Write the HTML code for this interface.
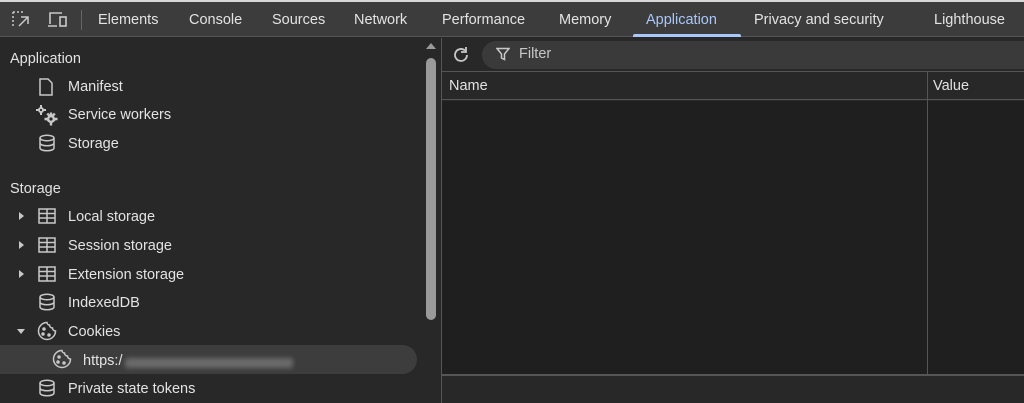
<!DOCTYPE html>
<html><head><style>
*{margin:0;padding:0;box-sizing:border-box}
body{width:1024px;height:403px;overflow:hidden;background:#282828;font-family:"Segoe UI","Liberation Sans",sans-serif;font-size:14.5px;color:#e3e3e3;position:relative}
.top{position:absolute;left:0;top:0;width:1024px;height:2px;background:#d8d8d8}
.tb{position:absolute;left:0;top:2px;width:1024px;height:35px;background:#3c3c3c;border-bottom:1px solid #555}
.tab{position:absolute;top:10px;color:#e3e3e3;font-size:14.5px}
.act{color:#a8c7fa}
.ul{position:absolute;left:633px;top:32px;width:108px;height:3px;background:#a8c7fa;border-radius:2px 2px 0 0}
.sb{position:absolute;left:0;top:38px;width:441px;height:365px;background:#282828}
.row{position:absolute;left:68px;font-size:14.5px;color:#e3e3e3;margin-top:2px}
.hd{position:absolute;left:10px;font-size:14.5px;color:#e3e3e3;margin-top:2px}
.ic{position:absolute}
.arr{position:absolute;left:19px;width:0;height:0;border-top:4px solid transparent;border-bottom:4px solid transparent;border-left:5px solid #c8c8c8}
.sel{position:absolute;left:0;top:307px;width:417px;height:29px;background:#3d3d3d;border-radius:0 15px 15px 0}
.scr{position:absolute;left:426px;width:10px;height:262px;background:#9a9a9a;border-radius:5px}
.rp{position:absolute;left:441px;top:38px;width:583px;height:365px;border-left:1px solid #555}
</style></head><body>
<div class="top"></div>
<div class="tb">
<svg class="ic" style="left:12px;top:9px" width="20" height="18" viewBox="0 0 20 18" fill="none" stroke="#c8c8c8" stroke-width="1.5"><path d="M1 1h12M1 1v14" stroke-dasharray="2 2"/><path d="M7 15L16 6M9 6h7v7"/></svg>
<svg class="ic" style="left:47px;top:9px" width="22" height="18" viewBox="0 0 22 18" fill="none" stroke="#c8c8c8" stroke-width="1.6"><path d="M3 13V2h12M1 15h9"/><rect x="13" y="6" width="6" height="9"/></svg>
<div style="position:absolute;left:81px;top:8px;width:1px;height:20px;background:#666"></div>
<span class="tab" style="left:98px">Elements</span>
<span class="tab" style="left:189px">Console</span>
<span class="tab" style="left:272px">Sources</span>
<span class="tab" style="left:354px">Network</span>
<span class="tab" style="left:442px">Performance</span>
<span class="tab" style="left:559px">Memory</span>
<span class="tab act" style="left:646px">Application</span>
<span class="tab" style="left:754px">Privacy and security</span>
<span class="tab" style="left:934px">Lighthouse</span>
<div class="ul"></div>
</div>
<div class="sb">
<div class="hd" style="top:11px">Application</div>
<svg class="ic" style="left:38px;top:40px" width="16" height="18" viewBox="0 0 16 18" fill="none" stroke="#c8c8c8" stroke-width="1.5"><path d="M2 1h8l4 4v12H2z"/></svg>
<div class="row" style="top:39px">Manifest</div>
<svg class="ic" style="left:35px;top:66px" width="24" height="22" viewBox="0 0 24 22" fill="#c8c8c8"><g><circle cx="6" cy="6" r="3"/><path d="M5 1h2v10H5zM1 5h10v2H1z"/></g><circle cx="6" cy="6" r="1.1" fill="#282828"/><g><circle cx="16" cy="15" r="4"/><path d="M14.8 8.5h2.4v13h-2.4zM9.5 13.8h13v2.4h-13z"/><path d="M11.4 10.4l1.7-1.7 7.5 7.5-1.7 1.7zM19 8.7l1.7 1.7-7.5 7.5-1.7-1.7z"/></g><circle cx="16" cy="15" r="1.6" fill="#282828"/></svg>
<div class="row" style="top:67px">Service workers</div>
<svg class="ic" style="left:38px;top:96px" width="18" height="18" viewBox="0 0 18 18" fill="none" stroke="#c8c8c8" stroke-width="1.5"><ellipse cx="9" cy="4" rx="7" ry="2.8"/><path d="M2 4v10c0 1.6 3 2.8 7 2.8s7-1.2 7-2.8V4M2 9c0 1.6 3 2.8 7 2.8s7-1.2 7-2.8"/></svg>
<div class="row" style="top:96px">Storage</div>
<div class="hd" style="top:141px">Storage</div>
<div class="arr" style="top:174px"></div>
<svg class="ic" style="left:38px;top:170px" width="18" height="16" viewBox="0 0 18 16" fill="none" stroke="#c8c8c8" stroke-width="1.5"><rect x="1" y="1" width="16" height="14"/><path d="M1 5.5h16M1 10h16M9 1v14"/></svg>
<div class="row" style="top:169px">Local storage</div>
<div class="arr" style="top:203px"></div>
<svg class="ic" style="left:38px;top:199px" width="18" height="16" viewBox="0 0 18 16" fill="none" stroke="#c8c8c8" stroke-width="1.5"><rect x="1" y="1" width="16" height="14"/><path d="M1 5.5h16M1 10h16M9 1v14"/></svg>
<div class="row" style="top:198px">Session storage</div>
<div class="arr" style="top:232px"></div>
<svg class="ic" style="left:38px;top:228px" width="18" height="16" viewBox="0 0 18 16" fill="none" stroke="#c8c8c8" stroke-width="1.5"><rect x="1" y="1" width="16" height="14"/><path d="M1 5.5h16M1 10h16M9 1v14"/></svg>
<div class="row" style="top:227px">Extension storage</div>
<svg class="ic" style="left:38px;top:255px" width="18" height="18" viewBox="0 0 18 18" fill="none" stroke="#c8c8c8" stroke-width="1.5"><ellipse cx="9" cy="4" rx="7" ry="2.8"/><path d="M2 4v10c0 1.6 3 2.8 7 2.8s7-1.2 7-2.8V4M2 9c0 1.6 3 2.8 7 2.8s7-1.2 7-2.8"/></svg>
<div class="row" style="top:255px">IndexedDB</div>
<div style="position:absolute;left:17px;top:291px;border-left:4px solid transparent;border-right:4px solid transparent;border-top:5px solid #c8c8c8"></div>
<div class="sel"></div>
<svg class="ic" style="left:37px;top:283px" width="20" height="20" viewBox="0 0 20 20" fill="none" stroke="#c8c8c8" stroke-width="1.5"><path d="M10 1.5a8.5 8.5 0 1 0 8.5 8.5 3 3 0 0 1-3-3 3 3 0 0 1-3-3 2.5 2.5 0 0 1-2.5-2.5z"/><circle cx="7" cy="8" r="1" fill="#c8c8c8"/><circle cx="6" cy="13" r="1" fill="#c8c8c8"/><circle cx="12" cy="14" r="1" fill="#c8c8c8"/></svg>
<div class="row" style="top:284px">Cookies</div>
<svg class="ic" style="left:52px;top:311px" width="20" height="20" viewBox="0 0 20 20" fill="none" stroke="#c8c8c8" stroke-width="1.5"><path d="M10 1.5a8.5 8.5 0 1 0 8.5 8.5 3 3 0 0 1-3-3 3 3 0 0 1-3-3 2.5 2.5 0 0 1-2.5-2.5z"/><circle cx="7" cy="8" r="1" fill="#c8c8c8"/><circle cx="6" cy="13" r="1" fill="#c8c8c8"/><circle cx="12" cy="14" r="1" fill="#c8c8c8"/></svg>
<div class="row" style="left:83px;top:313px">https:/</div>
<div style="position:absolute;left:125px;top:320px;width:168px;height:10px;background:#6a6a6a;filter:blur(2.5px);border-radius:3px"></div>
<svg class="ic" style="left:38px;top:341px" width="18" height="18" viewBox="0 0 18 18" fill="none" stroke="#c8c8c8" stroke-width="1.5"><ellipse cx="9" cy="4" rx="7" ry="2.8"/><path d="M2 4v10c0 1.6 3 2.8 7 2.8s7-1.2 7-2.8V4M2 9c0 1.6 3 2.8 7 2.8s7-1.2 7-2.8"/></svg>
<div class="row" style="top:341px">Private state tokens</div>
<div style="position:absolute;left:426px;top:5px;border-left:5px solid transparent;border-right:5px solid transparent;border-bottom:6px solid #9a9a9a"></div>
<div class="scr" style="top:20px"></div>
</div>
<div class="rp">
<svg class="ic" style="left:9px;top:7px" width="20" height="20" viewBox="0 0 20 20" fill="none" stroke="#c8c8c8" stroke-width="1.8"><path d="M16 10a6 6 0 1 1-2-4.5"/><path d="M15 2v5h-5"/></svg>
<div style="position:absolute;left:40px;top:3px;width:560px;height:28px;background:#3a3a3a;border-radius:14px"></div>
<svg class="ic" style="left:54px;top:9px" width="14" height="14" viewBox="0 0 14 14" fill="none" stroke="#c8c8c8" stroke-width="1.5"><path d="M1 1.5h12L8.5 7v5.5L5.5 11V7z"/></svg>
<span style="position:absolute;left:77px;top:8px;color:#c8c8c8">Filter</span>
<div style="position:absolute;left:0;top:33px;width:583px;height:1px;background:#555"></div>
<div style="position:absolute;left:0;top:34px;width:583px;height:28px;background:#282828;border-bottom:1px solid #555"></div>
<span style="position:absolute;left:7px;top:40px">Name</span>
<span style="position:absolute;left:491px;top:40px">Value</span>
<div style="position:absolute;left:0;top:63px;width:583px;height:273px;background:#1f1f1f"></div>
<div style="position:absolute;left:485px;top:34px;width:1px;height:302px;background:#555"></div>
<div style="position:absolute;left:0;top:336px;width:583px;height:2px;background:#555"></div>
</div>
</body></html>
